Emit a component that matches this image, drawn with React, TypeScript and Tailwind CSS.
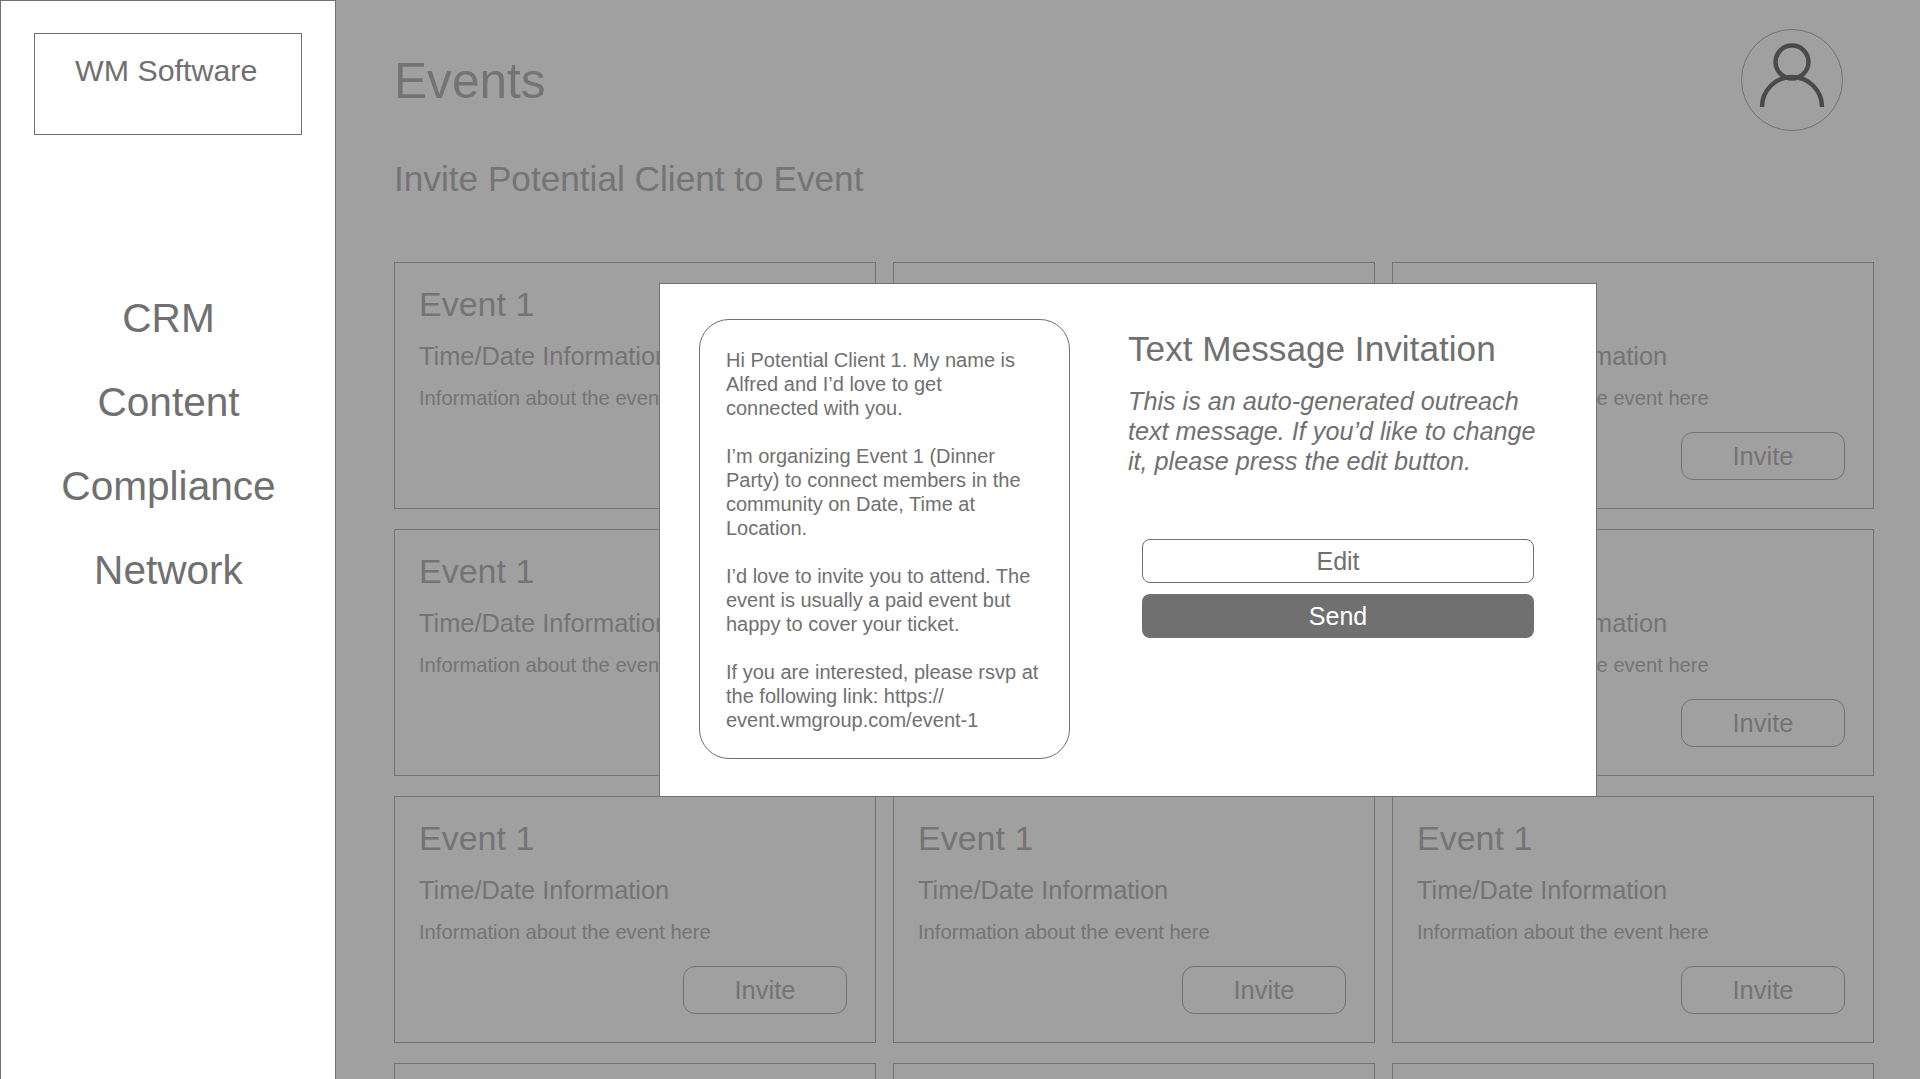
const font = "font-['Liberation_Sans',Arial,sans-serif]"

const navItems = ['CRM', 'Content', 'Compliance', 'Network']
const cards = Array.from({ length: 12 }, (_, i) => i)

function EventCard() {
  return (
    <div className="h-[247px] border border-[#727272] pl-[24px] pr-[28px] flex flex-col text-[#747474]">
      <div className="mt-[20px] h-[42px] leading-[42px] text-[34px]">Event 1</div>
      <div className="mt-[15px] h-[32px] leading-[32px] text-[25.4px]">Time/Date Information</div>
      <div className="mt-[14px] h-[24px] leading-[24px] text-[20.2px]">Information about the event here</div>
      <div className="mt-[22px] self-end w-[164px] h-[48px] pt-[1px] rounded-[12px] border border-[#727272] flex items-center justify-center text-[25.5px]">
        Invite
      </div>
    </div>
  )
}

export default function App() {
  return (
    <div className={`${font} relative flex h-[1079px] overflow-hidden bg-[#a0a0a0]`}>
      {/* Sidebar */}
      <aside className="w-[336px] shrink-0 h-full bg-white border border-[#6f6f6f] border-b-0 pl-[33px] pt-[32px] text-[#707070]">
        <div className="w-[268px] h-[102px] border border-[#6f6f6f] pl-[40px] pt-[18px] text-[30.4px] leading-[36px]">
          WM Software
        </div>
        <nav className="mt-[158px] w-[269px] flex flex-col items-center gap-[34px] text-[40.6px] leading-[50px]">
          {navItems.map((item) => (
            <div key={item}>{item}</div>
          ))}
        </nav>
      </aside>

      {/* Main */}
      <main className="flex-1 pl-[58px] pr-[46px] pt-[29px] text-[#747474]">
        <div className="flex items-center justify-between pr-[31px]">
          <h1 className="pt-[2px] text-[49.6px] leading-[58px]">Events</h1>
          <div className="w-[102px] h-[102px] rounded-full border border-[#727272]">
            <svg viewBox="0 0 100 100" className="w-full h-full" fill="none" stroke="#4a4a4a" strokeWidth="4.4">
              <circle cx="50" cy="32" r="16.5" />
              <path d="M20 77 A30 30 0 0 1 80 77" />
            </svg>
          </div>
        </div>
        <h2 className="mt-[28px] text-[35.2px] leading-[40px]">Invite Potential Client to Event</h2>
        <div className="mt-[63px] grid grid-cols-3 gap-x-[17px] gap-y-[20px]">
          {cards.map((i) => (
            <EventCard key={i} />
          ))}
        </div>
      </main>

      {/* Modal */}
      <div className="absolute left-[659px] top-[283px] w-[938px] h-[514px] bg-white border border-[#727272] flex text-[#707070]">
        <div className="ml-[39px] mt-[35px] w-[371px] h-[440px] rounded-[30px] border border-[#6f6f6f] pl-[26px] pt-[28px] text-[20px] leading-[24px]">
          <p>Hi Potential Client 1. My name is<br />Alfred and I’d love to get<br />connected with you.</p>
          <p className="mt-[24px]">I’m organizing Event 1 (Dinner<br />Party) to connect members in the<br />community on Date, Time at<br />Location.</p>
          <p className="mt-[24px]">I’d love to invite you to attend. The<br />event is usually a paid event but<br />happy to cover your ticket.</p>
          <p className="mt-[24px]">If you are interested, please rsvp at<br />the following link: https://<br />event.wmgroup.com/event-1</p>
        </div>
        <div className="ml-[58px] mt-[45px] w-[420px]">
          <h3 className="text-[35.2px] leading-[40px]">Text Message Invitation</h3>
          <p className="mt-[17px] italic text-[25.2px] leading-[30px]">
            This is an auto-generated outreach<br />text message. If you’d like to change<br />it, please press the edit button.
          </p>
          <div className="mt-[63px] ml-[14px] w-[392px] flex flex-col gap-[11px] text-[25px]">
            <div className="h-[44px] pt-[2px] rounded-[8px] border border-[#6f6f6f] flex items-center justify-center">Edit</div>
            <div className="h-[44px] pt-[2px] rounded-[8px] bg-[#707070] text-white flex items-center justify-center">Send</div>
          </div>
        </div>
      </div>
    </div>
  )
}
